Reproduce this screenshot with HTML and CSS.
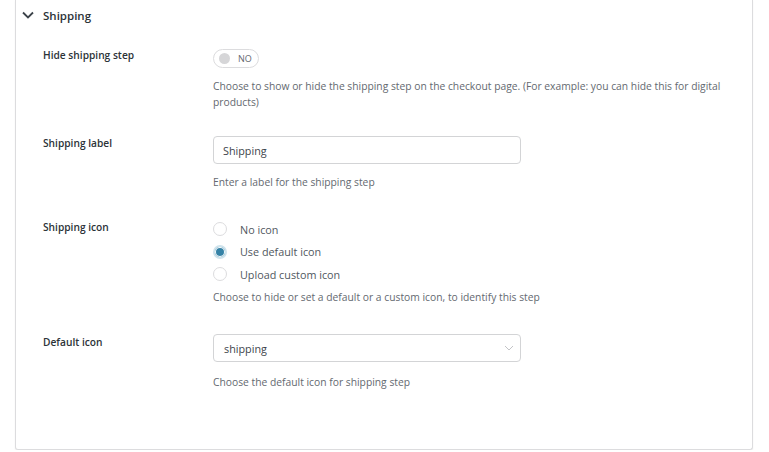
FILE: index.html
```html
<!DOCTYPE html>
<html lang="en">
<head>
    <meta charset="UTF-8">
    <meta name="viewport" content="width=device-width, initial-scale=1.0">
    <title>Shipping settings</title>
    <link rel="stylesheet" href="styles.css">
</head>
<body>

<div class="panel">
    <!-- Section header -->
    <div class="panel-head">
        <svg class="chevron" width="12" height="8" viewBox="0 0 12 8"><path d="M1 1.5 L6 6.5 L11 1.5" fill="none" stroke="#3c434a" stroke-width="1.8"/></svg>
        <span>Shipping</span>
    </div>

    <div class="row">
        <div class="label">Hide shipping step</div>
        <div class="field">
            <div class="toggle"><span class="knob"></span>NO</div>
            <p class="help">Choose to show or hide the shipping step on the checkout page. (For example: you can hide this for digital products)</p>
        </div>
    </div>

    <div class="row">
        <div class="label">Shipping label</div>
        <div class="field">
            <input type="text" class="text-input" value="Shipping">
            <p class="help">Enter a label for the shipping step</p>
        </div>
    </div>

    <div class="row">
        <div class="label">Shipping icon</div>
        <div class="field">
            <label class="radio"><span class="dot"></span>No icon</label>
            <label class="radio"><span class="dot checked"></span>Use default icon</label>
            <label class="radio"><span class="dot"></span>Upload custom icon</label>
            <p class="help">Choose to hide or set a default or a custom icon, to identify this step</p>
        </div>
    </div>

    <div class="row">
        <div class="label">Default icon</div>
        <div class="field">
            <div class="select">
                <span>shipping</span>
                <svg width="10" height="6" viewBox="0 0 10 6"><path d="M1 1 L5 5 L9 1" fill="none" stroke="#c3c4c7" stroke-width="1"/></svg>
            </div>
            <p class="help">Choose the default icon for shipping step</p>
        </div>
    </div>
</div>

</body>
</html>
```

FILE: styles.css
```css
body {
    margin: 0;
    padding: 0 16px 0 15px;
    background-color: #fff;
    font-family: "Open Sans", "Noto Sans", sans-serif;
    color: #3c434a;
}
.panel {
    height: 450px;
    box-sizing: border-box;
    border: 1px solid #dcdcde;
    border-top: none;
    border-radius: 0 0 3px 3px;
    box-shadow: 0 1px 2px rgba(0, 0, 0, 0.06);
    background-color: #fff;
}
.panel-head {
    display: flex;
    align-items: center;
    height: 30px;
    padding-left: 6px;
    font-size: 11.5px;
    font-weight: 600;
    color: #2c3338;
}
.chevron {
    margin-right: 9px;
}
.row {
    display: flex;
    padding-left: 27px;
}
.row:nth-child(2) { padding-top: 17px; height: 82px; }
.row:nth-child(3) { padding-top: 6px; height: 80px; }
.row:nth-child(4) { padding-top: 4px; height: 115px; }
.label {
    width: 170px;
    font-size: 10.2px;
    font-weight: 600;
    color: #2c3338;
    line-height: 16px;
}
.field {
    flex: 1;
    padding-right: 20px;
}
.help {
    margin: 0;
    font-size: 10.3px;
    line-height: 16px;
    color: #646970;
}
.toggle {
    display: inline-flex;
    align-items: center;
    width: 44px;
    height: 17px;
    margin-top: -7px;
    border: 1px solid #dcdcde;
    border-radius: 10px;
    font-size: 9px;
    color: #646970;
    box-sizing: content-box;
    margin-bottom: 10px;
}
.knob {
    width: 11px;
    height: 11px;
    border-radius: 50%;
    background-color: #d6d6d8;
    margin: 0 8px 0 5px;
}
.text-input {
    display: block;
    width: 308px;
    height: 28px;
    box-sizing: border-box;
    border: 1px solid #d3d4d6;
    border-radius: 4px;
    padding: 0 9px;
    font-family: inherit;
    font-size: 10.8px;
    color: #3c434a;
    margin: 1px 0 10px;
}
.radio {
    display: flex;
    align-items: center;
    height: 22.5px;
    font-size: 10.8px;
    color: #50575e;
}
.radio:first-child { margin-top: -1px; }
.dot {
    width: 14px;
    height: 14px;
    box-sizing: border-box;
    border: 1px solid #dcdcde;
    border-radius: 50%;
    margin-right: 13px;
}
.dot.checked {
    border: 2px solid #cfe3ec;
    background-color: #3582a6;
    box-shadow: inset 0 0 0 1px #fff;
}
.radio:last-of-type { margin-bottom: 3px; }
.select {
    display: flex;
    align-items: center;
    justify-content: space-between;
    width: 308px;
    height: 28px;
    box-sizing: border-box;
    border: 1px solid #d3d4d6;
    border-radius: 4px;
    padding: 0 6px 0 10px;
    font-size: 10.8px;
    color: #3c434a;
    margin: 0 0 12px;
}
```
